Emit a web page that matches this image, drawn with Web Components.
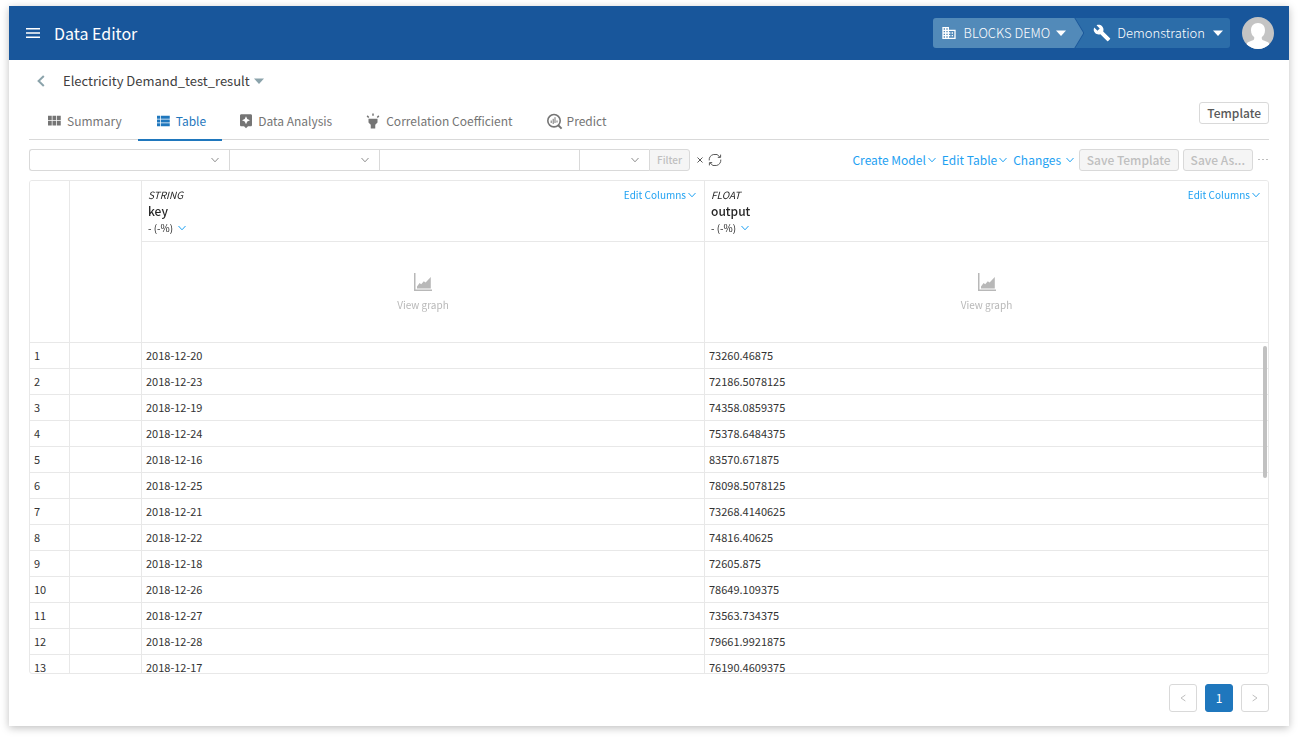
<!DOCTYPE html>
<html lang="en">
<head>
<meta charset="utf-8">
<title>Data Editor</title>
<style>
  html, body { height: 100%; margin: 0; }
  body { background: #fff; color: #404040; font-family: "Noto Sans CJK JP", "Noto Sans", sans-serif; font-size: 12px; }
</style>
</head>
<body>
<data-editor></data-editor>
<script>
const BASE = `:host, *, *::before, *::after { box-sizing: border-box; }
  button, input, select { font: inherit; color: inherit; margin: 0; }
  button { cursor: pointer; } a { color: inherit; text-decoration: none; }`;

function define(name, render) {
  customElements.define(name, class extends HTMLElement {
    constructor() { super(); this.attachShadow({ mode: 'open' }); }
    connectedCallback() {
      const [css, html] = render(this);
      const t = document.createElement('template');
      t.innerHTML = `<style>${BASE}${css}</style>${html}`;
      this.shadowRoot.replaceChildren(t.content.cloneNode(true));
    }
  });
}

const line = (d, w = 1) => `<path d="${d}" fill="none" stroke="currentColor" stroke-width="${w}"/>`;
const ICONS = {
  menu: ['0 0 14 10', '<path fill="currentColor" d="M0 0h14v1.600H0zM0 4.200h14v1.600H0zM0 8.400h14V10H0z"/>'],
  back: ['0 0 8 12', line('M6.8 1L1.6 6l5.2 5', 2)],
  caret: ['0 0 10 6', '<path fill="currentColor" d="M0 .5h10L5 6z"/>'],
  chevron: ['0 0 8 6', line('M.5 1L4 4.8 7.5 1')],
  business: ['0 0 24 24', '<path fill="currentColor" d="M12 7V3H2v18h20V7H12zM6 19H4v-2h2v2zm0-4H4v-2h2v2zm0-4H4V9h2v2zm0-4H4V5h2v2zm4 12H8v-2h2v2zm0-4H8v-2h2v2zm0-4H8V9h2v2zm0-4H8V5h2v2zm10 12h-8v-2h2v-2h-2v-2h2v-2h-2V9h8v10zm-2-8h-2v2h2v-2zm0 4h-2v2h2v-2z"/>'],
  build: ['0 0 24 24', '<path fill="currentColor" d="M22.7 19l-9.1-9.1c.9-2.3.4-5-1.5-6.9-2-2-5-2.4-7.4-1.3L9 6 6 9 1.6 4.7C.4 7.1.9 10.1 2.9 12.1c1.9 1.9 4.6 2.4 6.9 1.5l9.1 9.1c.4.4 1 .4 1.4 0l2.3-2.3c.5-.4.5-1.1.1-1.4z"/>'],
  modules: ['0 0 24 24', '<path fill="currentColor" d="M4 11h5V5H4v6zm0 7h5v-6H4v6zm6 0h5v-6h-5v6zm6 0h5v-6h-5v6zm-6-7h5V5h-5v6zm6-6v6h5V5h-5z"/>'],
  list: ['0 0 24 24', '<path fill="currentColor" d="M4 14h4v-4H4v4zm0 5h4v-4H4v4zM4 9h4V5H4v4zm5 5h12v-4H9v4zm0 5h12v-4H9v4zM9 5v4h12V5H9z"/>'],
  assistant: ['0 0 24 24', '<path fill="currentColor" d="M19 2H5c-1.11 0-2 .9-2 2v14c0 1.1.89 2 2 2h4l3 3 3-3h4c1.1 0 2-.9 2-2V4c0-1.1-.9-2-2-2zm-5.12 10.88L12 17l-1.88-4.12L6 11l4.12-1.88L12 5l1.88 4.12L18 11l-4.12 1.88z"/>'],
  highlight: ['0 0 24 24', '<path fill="currentColor" d="M6 14l3 3v5h6v-5l3-3V9H6zm5-12h2v3h-2zM3.5 5.875L4.914 4.46l2.12 2.122L5.62 7.997zm13.46.71l2.123-2.12 1.414 1.414L18.375 8z"/>'],
  predict: ['0 0 18 18', '<circle cx="9" cy="8.700" r="6.200" fill="none" stroke="currentColor" stroke-width="1.600"/>' + line('M13 13l3.600 3.600', 2) + line('M6.200 8.500v2.500M8.200 6.800v5.200M10 5.200v5.800M12 8.500v2', 1)],
  refresh: ['0 0 14 14', line('M1.2 7.4A5.8 5.8 0 0 1 11.9 4M12.8 6.6A5.8 5.8 0 0 1 2.1 10M12.6 1.6v2.8H9.8M1.4 12.4V9.6h2.8')],
  clear: ['0 0 8 8', line('M1.500 1.500l5 5M6.500 1.500l-5 5')],
  dots: ['0 0 10 4', '<path fill="currentColor" d="M0 1h2v1H0zM4 1h2v1H4zM8 1h2v1H8z"/>'],
  chart: ['0 0 18 18', '<path fill="currentColor" d="M0 0h1.500v16.500H18V18H0zM3 15.400v-2l2.600-3.400 1.600 1.200 2.600-3 1.800 1.200L16.800 4v11.400z"/>'],
  prev: ['0 0 6 8', line('M5.4 1L1 4l4.400 3')],
  next: ['0 0 6 8', line('M.6 1L5 4 .6 7')],
  person: ['0 0 32 32', '<rect width="32" height="32" fill="#c4c4c4"/><path fill="#fff" d="M16 6c-4.300 0-7 3-7 7.200 0 3.300 1.400 5.600 3.200 6.900v1.500c0 1-.7 1.600-2 2L6.500 24.900C4.800 25.600 4.200 27.500 4 32h24c-.2-4.500-.8-6.400-2.500-7.100l-3.700-1.300c-1.300-.4-2-1-2-2v-1.500c1.800-1.300 3.200-3.600 3.200-6.900C23 9 20.300 6 16 6z"/>']
};

define('ui-icon', el => {
  const [box, art] = ICONS[el.getAttribute('name')];
  const [, , w, h] = box.split(' ');
  const width = el.getAttribute('size') || w, height = el.getAttribute('size') || h;
  return [':host { display: inline-flex; flex: none; } svg { display: block; }',
    `<svg width="${width}" height="${height}" viewBox="${box}" aria-hidden="true">${art}</svg>`];
});

define('crumb-switch', () => [`
  :host { display: flex; height: 30px; border-radius: 3px; overflow: hidden; background: #2c6da9; color: #fff; font-size: 13px; font-weight: 300; }
  button { display: flex; align-items: center; height: 30px; border: 0; background: none; padding: 0 7px 0 9px; line-height: 30px; }
  .edge, .first { clip-path: polygon(0 0, calc(100% - 9px) 0, 100% 50%, calc(100% - 9px) 100%, 0 100%); }
  .edge { background: #1b579a; padding-right: 1px; }
  .first { background: #528ab9; padding: 0 17px 0 8px; }
  .first ui-icon:first-child { margin-right: 7px; }
  .second ui-icon:first-child { margin-right: 6px; }
  .first .caret { margin-left: 6px; }
  .second .caret { margin-left: 8px; }
  `, `<div class="edge"><button class="first" type="button"><ui-icon name="business" size="16"></ui-icon>BLOCKS DEMO<ui-icon class="caret" name="caret"></ui-icon></button></div>
  <button class="second" type="button"><ui-icon name="build" size="18"></ui-icon>Demonstration<ui-icon class="caret" name="caret"></ui-icon></button>`]);

define('app-header', () => [`
  :host { display: flex; align-items: center; height: 54px; padding: 0 15px 0 17px; background: #18569b; color: #fff; }
  h1 { flex: 1; margin: 0 0 0 14px; font-size: 16px; font-weight: 400; line-height: 24px; }
  button { display: flex; padding: 0; border: 0; background: none; }
  .avatar { width: 32px; height: 32px; margin-left: 12px; border-radius: 50%; overflow: hidden; }
  `, `<button type="button" aria-label="Menu"><ui-icon name="menu"></ui-icon></button>
  <h1>Data Editor</h1><crumb-switch></crumb-switch>
  <button class="avatar" type="button" aria-label="Account"><ui-icon name="person"></ui-icon></button>`]);

define('title-bar', () => [`
  :host { display: flex; align-items: center; height: 42px; padding-left: 8px; color: #404040; }
  a { display: flex; color: #8ba3ab; }
  h2 { margin: 0 4px 0 18px; font-size: 13px; font-weight: 400; line-height: 20px; }
  button { display: flex; padding: 0; border: 0; background: none; color: #8ba3ab; }
  `, `<a href="#back" aria-label="Back"><ui-icon name="back"></ui-icon></a><h2><slot></slot></h2>
  <button type="button" aria-label="Switch table"><ui-icon name="caret"></ui-icon></button>`]);

define('tab-link', el => [`
  :host { display: block; height: 39px; }
  a { display: flex; align-items: center; gap: 4px; height: 39px; padding: 0 16px; border-bottom: 2px solid transparent; color: #757575; font-size: 12px; line-height: 20px; }
  :host([active]) a { color: #1f77bd; border-color: #1f77bd; }
  `, `<a href="#"><ui-icon name="${el.getAttribute('icon')}" size="${el.getAttribute('size') || 18}"></ui-icon><span><slot></slot></span></a>`]);

define('tab-bar', () => [`
  :host { display: flex; align-items: flex-start; height: 38px; border-bottom: 1px solid #d9d9d9; }
  nav { display: flex; flex: 1; }
  `, `<nav><slot></slot></nav><slot name="action"></slot>`]);

define('ui-button', el => [`
  :host { display: block; }
  button { display: block; height: 22px; padding: 0 7px; border: 1px solid #d9d9d9; border-radius: 3px; background: #fff; color: #595959; font-size: 12px; font-weight: 500; line-height: 20px; white-space: nowrap; }
  button:disabled { background: #f5f5f5; color: #bfbfbf; cursor: default; }
  `, `<button type="button"${el.hasAttribute('disabled') ? ' disabled' : ''}><slot></slot></button>`]);

define('menu-link', () => [`
  :host { display: block; }
  button { display: flex; align-items: center; gap: 2px; padding: 0; border: 0; background: none; color: #1ea1f2; line-height: 16px; white-space: nowrap; }
  `, `<button type="button" aria-haspopup="menu"><slot></slot><ui-icon name="chevron"></ui-icon></button>`]);

define('filter-bar', () => [`
  :host { display: flex; align-items: center; height: 22px; }
  .field { display: grid; align-items: center; width: 150px; height: 22px; border: 1px solid #d9d9d9; border-right: 0; }
  .field > * { grid-area: 1 / 1; }
  .field ui-icon { justify-self: end; margin-right: 10px; color: #8c8c8c; pointer-events: none; }
  .wide { width: 200px; } .narrow { width: 70px; }
  .field:first-of-type { border-radius: 3px 0 0 3px; }
  select, input { appearance: none; width: 100%; height: 20px; padding: 0 7px; border: 0; background: none; outline: 0; }
  .apply { width: 41px; height: 22px; padding: 0; border: 1px solid #d9d9d9; border-radius: 0 3px 3px 0; background: #f5f5f5; color: #bfbfbf; font-size: 10px; font-weight: 500; line-height: 20px; }
  .plain { display: flex; padding: 0; border: 0; background: none; color: #595959; margin-left: 6px; }
  .plain + .plain { margin-left: 4px; }
  `, `<div class="field wide"><select aria-label="Column"></select><ui-icon name="chevron"></ui-icon></div>
  <div class="field"><select aria-label="Condition"></select><ui-icon name="chevron"></ui-icon></div>
  <div class="field wide"><input type="text" aria-label="Value"></div>
  <div class="field narrow"><select aria-label="Join"></select><ui-icon name="chevron"></ui-icon></div>
  <button class="apply" type="button" disabled>Filter</button>
  <button class="plain" type="button" aria-label="Clear filter"><ui-icon name="clear"></ui-icon></button>
  <button class="plain" type="button" aria-label="Reload"><ui-icon name="refresh"></ui-icon></button>`]);

define('tool-row', () => [`
  :host { display: flex; justify-content: space-between; align-items: center; margin: 9px 0; }
  .actions { display: flex; align-items: center; gap: 5px; }
  .menus { display: flex; gap: 6px; }
  .saves { display: flex; gap: 4px; }
  .more { display: flex; padding: 0 1px 0 0; border: 0; background: none; color: #bfbfbf; }
  `, `<filter-bar></filter-bar>
  <div class="actions"><div class="menus"><menu-link>Create Model</menu-link><menu-link>Edit Table</menu-link><menu-link>Changes&nbsp;</menu-link></div>
  <div class="saves"><ui-button disabled>Save Template</ui-button><ui-button disabled>Save As...</ui-button></div>
  <button class="more" type="button" aria-label="More"><ui-icon name="dots"></ui-icon></button></div>`]);

define('column-head', el => [`
  :host { display: flex; justify-content: space-between; align-items: flex-start; padding: 6px 8px 0 6px; height: 60px; font-size: 10px; color: #262626; }
  .type { font-style: italic; line-height: 16px; }
  .name { font-size: 12px; font-weight: 500; line-height: 16px; }
  .rate { display: flex; align-items: center; gap: 5px; line-height: 16px; margin-top: 1px; padding: 0; border: 0; background: none; }
  .rate ui-icon { color: #1ea1f2; }
  `, `<div><div class="type">${el.getAttribute('type')}</div><div class="name"><slot></slot></div>
  <button class="rate" type="button">- (-%)<ui-icon name="chevron"></ui-icon></button></div><menu-link>Edit Columns</menu-link>`]);

define('graph-link', () => [`
  :host { display: flex; align-items: center; justify-content: center; height: 100px; padding-top: 2px; }
  button { display: flex; flex-direction: column; align-items: center; gap: 6px; padding: 0; border: 0; background: none; color: #b8b8b8; font-size: 10px; line-height: 16px; }
  `, `<button type="button"><ui-icon name="chart"></ui-icon>View graph</button>`]);

const ROWS = [
  ['2018-12-20', '73260.46875'], ['2018-12-23', '72186.5078125'], ['2018-12-19', '74358.0859375'],
  ['2018-12-24', '75378.6484375'], ['2018-12-16', '83570.671875'], ['2018-12-25', '78098.5078125'],
  ['2018-12-21', '73268.4140625'], ['2018-12-22', '74816.40625'], ['2018-12-18', '72605.875'],
  ['2018-12-26', '78649.109375'], ['2018-12-27', '73563.734375'], ['2018-12-28', '79661.9921875'],
  ['2018-12-17', '76190.4609375']
];

define('data-table', () => [`
  :host { display: block; position: relative; flex: 1; min-height: 0; border: 1px solid #e8e8e8; border-radius: 3px; overflow: hidden; }
  .scroll { height: 100%; overflow: auto; scrollbar-width: none; }
  table { width: 100%; table-layout: fixed; border-collapse: separate; border-spacing: 0; }
  .num { width: 40px; } .mark { width: 72px; }
  th, td { padding: 0; border-right: 1px solid #e8e8e8; border-bottom: 1px solid #e8e8e8; font-weight: 400; text-align: left; }
  thead { position: sticky; top: 0; background: #fff; }
  tr > :last-child { border-right: 0; }
  td { height: 26px; padding: 0 4px 2px; font-size: 11px; line-height: 16px; color: #333; }
  .thumb { position: absolute; top: 165px; right: 1px; width: 4px; height: 132px; border-radius: 2px; background: #c1c1c1; }
  `, `<div class="scroll"><table>
  <colgroup><col class="num"><col class="mark"><col><col></colgroup>
  <thead>
    <tr><th rowspan="2"></th><th rowspan="2"></th><th scope="col"><column-head type="STRING">key</column-head></th><th scope="col"><column-head type="FLOAT">output</column-head></th></tr>
    <tr><th><graph-link></graph-link></th><th><graph-link></graph-link></th></tr>
  </thead>
  <tbody>${ROWS.map(([k, v], i) => `<tr><td>${i + 1}</td><td></td><td>${k}</td><td>${v}</td></tr>`).join('')}</tbody>
  </table></div><div class="thumb"></div>`]);

define('page-nav', () => [`
  :host { display: block; margin-top: 10px; }
  nav { display: flex; justify-content: flex-end; gap: 8px; }
  button { display: flex; align-items: center; justify-content: center; width: 28px; height: 28px; padding: 0; border: 1px solid #d9d9d9; border-radius: 3px; background: #fff; color: #bfbfbf; font-size: 12px; line-height: 26px; }
  [aria-current] { border-color: #1f77bd; background: #1f77bd; color: #fff; }
  `, `<nav aria-label="Pages"><button type="button" aria-label="Previous" disabled><ui-icon name="prev"></ui-icon></button>
  <button type="button" aria-current="page">1</button>
  <button type="button" aria-label="Next" disabled><ui-icon name="next"></ui-icon></button></nav>`]);

define('data-editor', () => [`
  :host { display: block; height: 100%; padding: 6px 9px 12px; overflow: hidden; }
  .card { display: flex; flex-direction: column; height: 100%; background: #fff; box-shadow: 0 2px 8px rgba(0, 0, 0, .25); }
  main { display: flex; flex-direction: column; flex: 1; min-height: 0; padding: 0 20px 14px; }
  `, `<div class="card"><app-header></app-header><main>
  <title-bar>Electricity Demand_test_result</title-bar>
  <tab-bar><tab-link icon="modules">Summary</tab-link><tab-link icon="list" active>Table</tab-link>
  <tab-link icon="assistant" size="16">Data Analysis</tab-link><tab-link icon="highlight">Correlation Coefficient</tab-link>
  <tab-link icon="predict">Predict</tab-link><ui-button slot="action">Template</ui-button></tab-bar>
  <tool-row></tool-row><data-table></data-table><page-nav></page-nav></main></div>`]);
</script>
</body>
</html>
